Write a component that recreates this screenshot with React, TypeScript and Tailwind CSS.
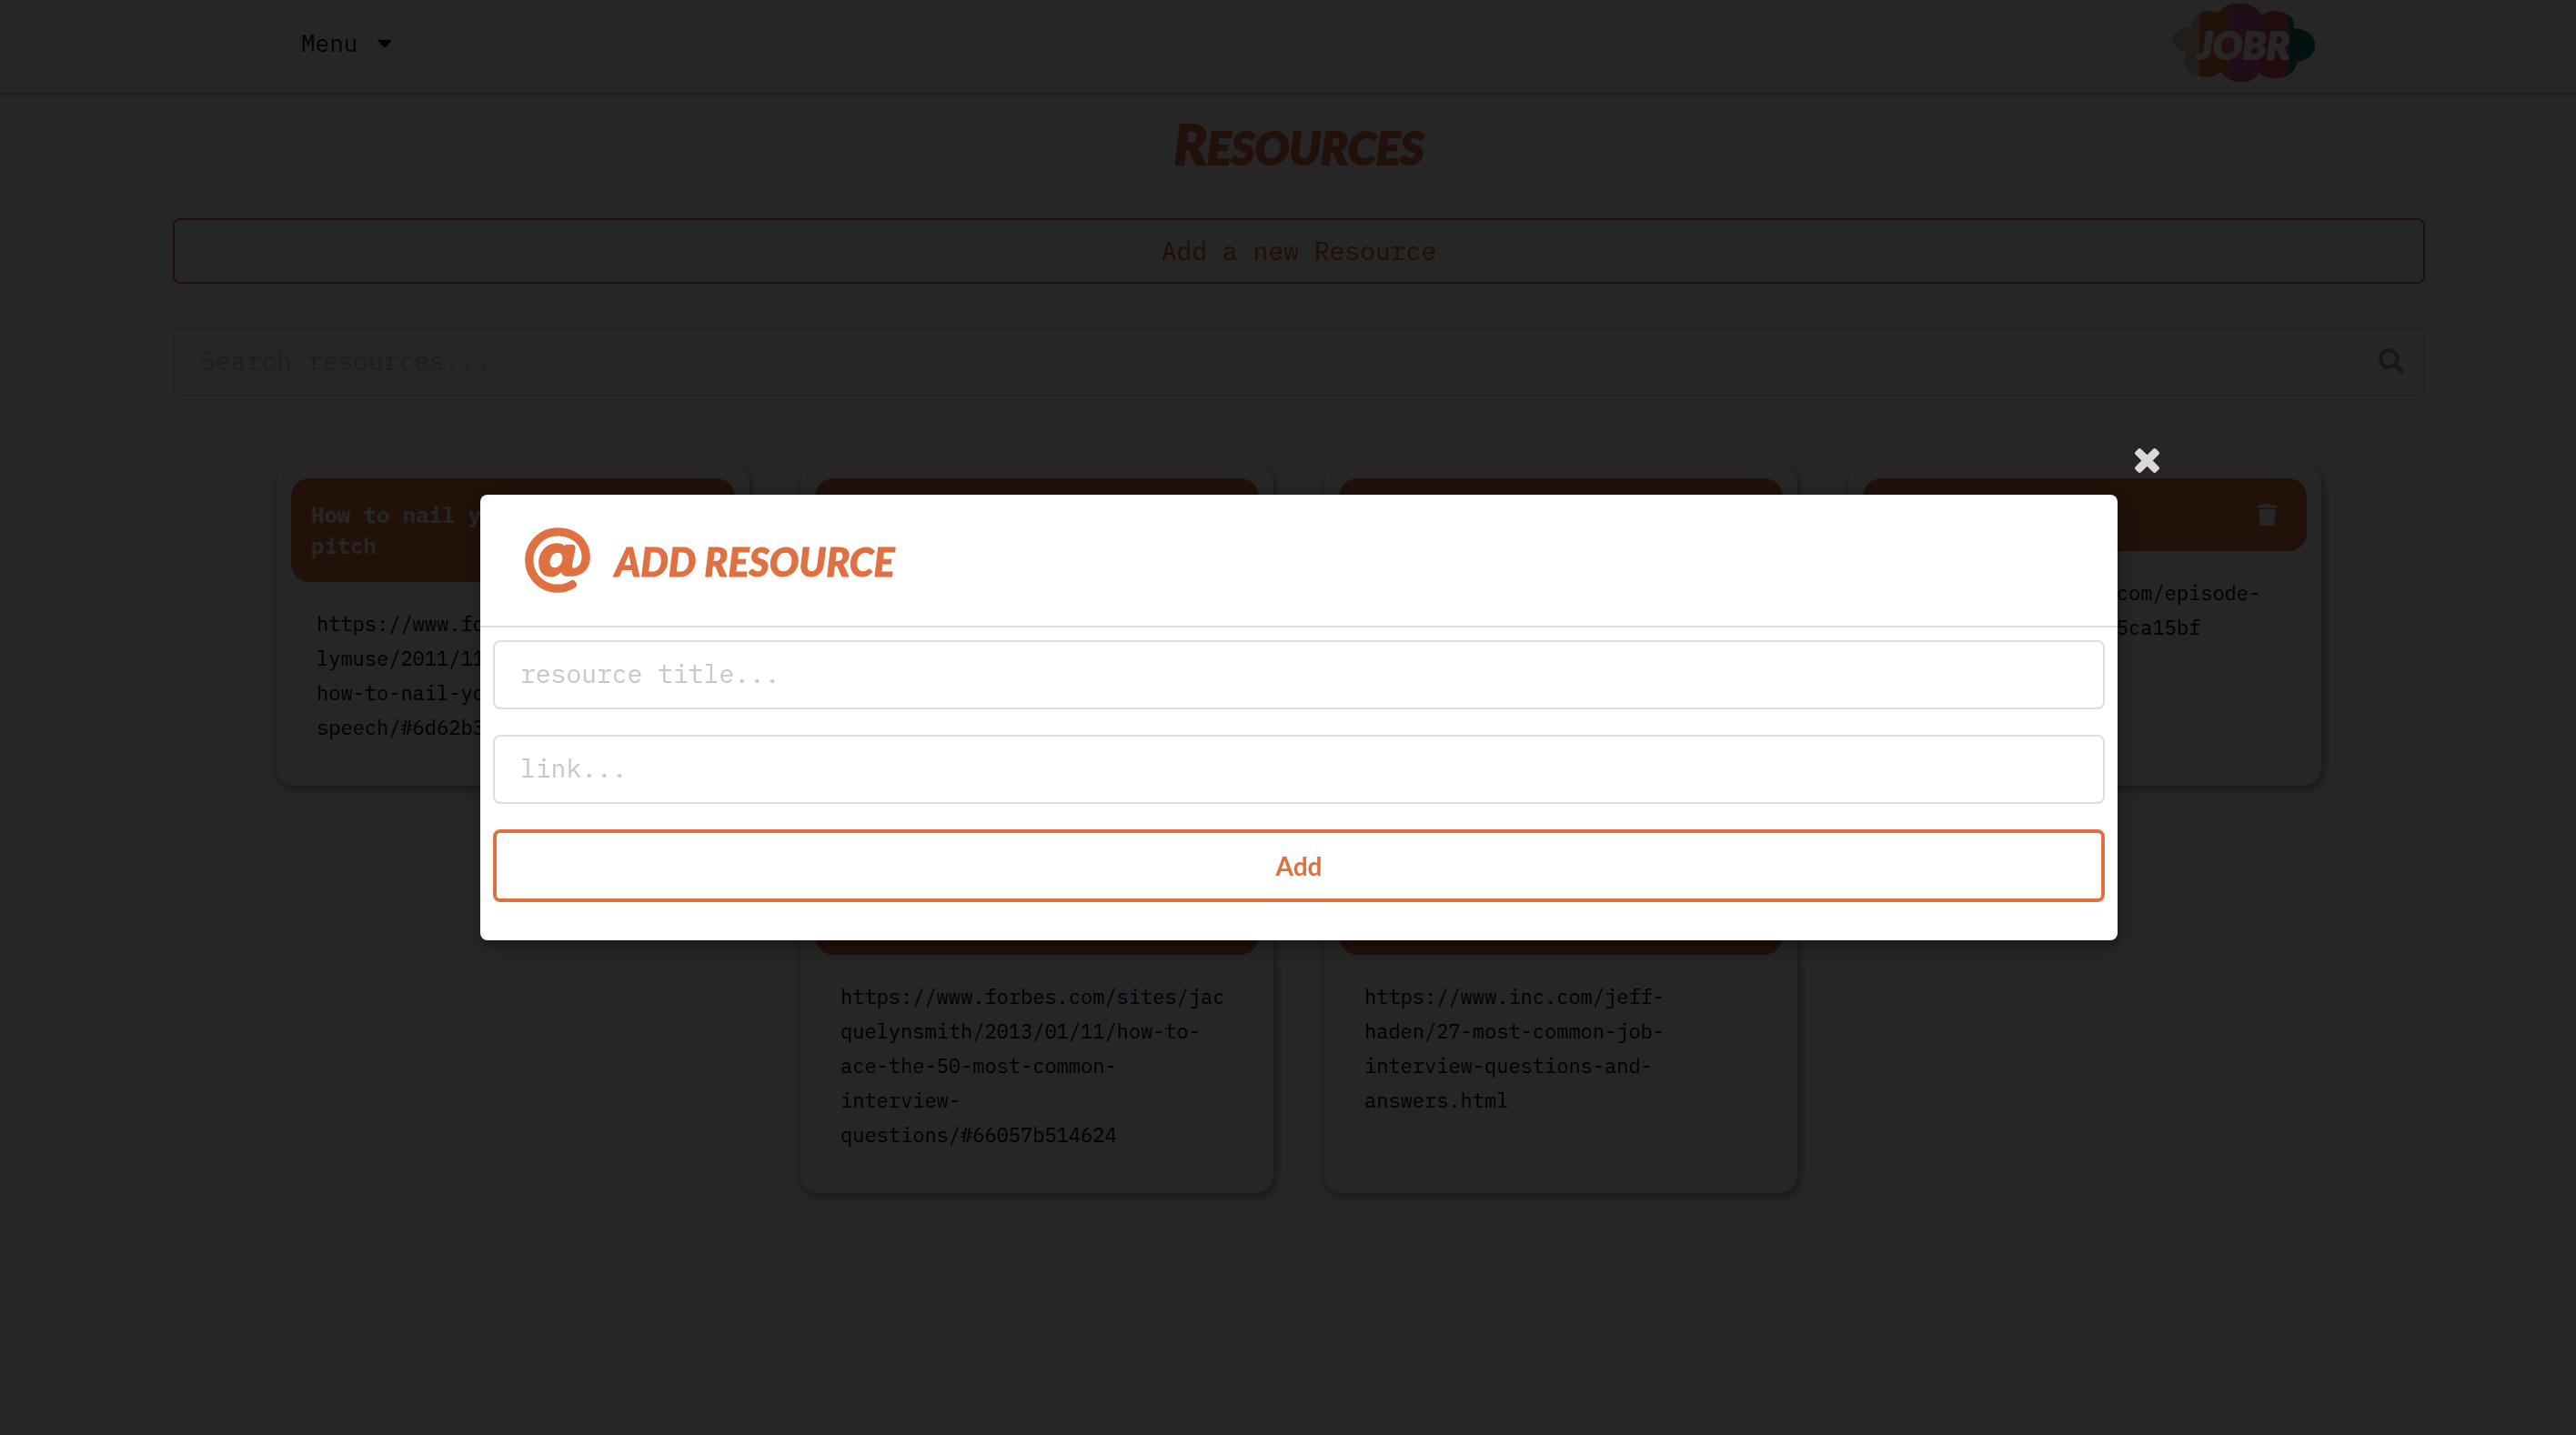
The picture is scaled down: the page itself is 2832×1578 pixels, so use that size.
import React from "react";
import { FaAt, FaCaretDown, FaSearch, FaTrash } from "react-icons/fa";

type Resource = { title: string; link: string };

const resources: Resource[] = [
  {
    title: "How to nail your elevator pitch",
    link: "https://www.forbes.com/sites/dailymuse/2011/11/28/perfect-pitch-how-to-nail-your-elevator-speech/#6d62b3",
  },
  { title: "Resume tips", link: "https://www.forbes.com/resume" },
  { title: "Networking", link: "https://www.inc.com/networking" },
  { title: "Podcast", link: "https://www.podjob.com/episode-101-interview-tips-5ca15bf" },
  {
    title: "How to ace the 50 most common questions",
    link: "https://www.forbes.com/sites/jacquelynsmith/2013/01/11/how-to-ace-the-50-most-common-interview-questions/#66057b514624",
  },
  {
    title: "27 most common interview questions",
    link: "https://www.inc.com/jeff-haden/27-most-common-job-interview-questions-and-answers.html",
  },
];

function Logo() {
  return (
    <svg viewBox="0 0 476 264" className="h-[88px] w-[158px]" role="img" aria-label="JOBR">
      <defs>
        <clipPath id="cloud">
          <ellipse cx="68" cy="122" rx="68" ry="43" />
          <ellipse cx="126" cy="72" rx="60" ry="45" />
          <ellipse cx="222" cy="62" rx="78" ry="62" />
          <ellipse cx="341" cy="72" rx="63" ry="45" />
          <ellipse cx="404" cy="140" rx="70" ry="56" />
          <ellipse cx="110" cy="190" rx="72" ry="56" />
          <ellipse cx="228" cy="196" rx="74" ry="68" />
          <ellipse cx="341" cy="196" rx="72" ry="54" />
          <rect x="80" y="70" width="320" height="130" />
        </clipPath>
      </defs>
      <g clipPath="url(#cloud)">
        <rect width="90" height="264" fill="#dcc0b0" />
        <rect x="90" width="98" height="264" fill="#de7041" />
        <rect x="188" width="100" height="264" fill="#cc5c98" />
        <rect x="288" width="97" height="264" fill="#d44c5c" />
        <rect x="385" width="91" height="264" fill="#1f7070" />
      </g>
      <text
        x="236"
        y="185"
        textAnchor="middle"
        fill="#ffffff"
        stroke="#ffffff"
        strokeWidth="6"
        strokeLinejoin="round"
        className="font-['Permanent_Marker','Lato',sans-serif] text-[128px] font-black italic"
      >
        JOBR
      </text>
    </svg>
  );
}

function CloseIcon() {
  return (
    <svg viewBox="302 366 1188 1188" className="size-[27px]" fill="currentColor" aria-hidden="true">
      <path d="M1490 1322q0 40-28 68l-136 136q-28 28-68 28t-68-28l-294-294-294 294q-28 28-68 28t-68-28l-136-136q-28-28-28-68t28-68l294-294-294-294q-28-28-28-68t28-68l136-136q28-28 68-28t68 28l294 294 294-294q28-28 68-28t68 28l136 136q28 28 28 68t-28 68l-294 294 294 294q28 28 28 68z" />
    </svg>
  );
}

function Header() {
  return (
    <header className="h-[102px] bg-white pl-6 shadow-[0_2px_3px_1px_rgba(0,0,0,0.2)]">
      <div className="mx-auto flex max-w-[2248px] items-start justify-between pt-[3px] pr-[6px] pl-[27px]">
        <button type="button" className="flex h-[88px] items-center gap-[22px] text-[26px] text-black/95">
          Menu
          <FaCaretDown size={26} className="w-4" />
        </button>
        <Logo />
      </div>
    </header>
  );
}

function Card({ title, link }: Resource) {
  return (
    <article className="flex flex-col rounded-[20px] bg-white px-4 pt-[14px] pb-[45px] shadow-[2px_4px_12px_rgba(0,0,0,0.4)]">
      <div className="flex items-center justify-between gap-6 rounded-[20px] bg-[#de7041] py-[23px] pr-[33px] pl-[22px] text-white">
        <h2 className="text-[24px] leading-[34px] font-bold">{title}</h2>
        <button type="button" aria-label={`Delete ${title}`} className="shrink-0">
          <FaTrash size={24} className="w-[21px]" />
        </button>
      </div>
      <a href={link} className="mt-[27px] px-7 text-[22px] leading-[38px] wrap-anywhere text-black">
        {link}
      </a>
    </article>
  );
}

function AddResourceModal() {
  const field =
    "h-[76px] w-full rounded-lg border-2 border-[#dedede] px-7 pb-1 text-[28px] placeholder:text-[#c7c7c7] outline-none";
  return (
    <div className="fixed inset-0 flex items-center justify-center bg-black/85 pl-6">
      <div
        role="dialog"
        aria-modal="true"
        aria-labelledby="modal-title"
        className="relative w-full max-w-[1800px] rounded-lg bg-white shadow-[2px_6px_6px_rgba(0,0,0,0.2),2px_6px_30px_4px_rgba(0,0,0,0.2)]"
      >
        <button type="button" aria-label="Close" className="absolute -top-[51px] -right-[46px] text-[#d9d9d9]">
          <CloseIcon />
        </button>
        <header className="flex h-[146px] items-center gap-[26px] border-b-2 border-[#dedede] px-12 text-[#de7041]">
          <FaAt size={74} />
          <h2
            id="modal-title"
            className="pt-1 font-['Permanent_Marker','Lato',sans-serif] text-[43px] leading-[48px] font-black uppercase italic [-webkit-text-stroke:1px]"
          >
            add resource
          </h2>
        </header>
        <form className="flex flex-col gap-7 px-[14px] pt-[14px] pb-[42px]" onSubmit={(e) => e.preventDefault()}>
          <input aria-label="Resource title" placeholder="resource title..." className={field} />
          <input aria-label="Link" placeholder="link..." className={field} />
          <button
            type="submit"
            className="h-20 rounded-lg border-4 border-[#de7041] font-['Lato',sans-serif] text-[28px] font-bold text-[#de7041]"
          >
            Add
          </button>
        </form>
      </div>
    </div>
  );
}

export default function App() {
  return (
    <div className="min-h-screen bg-white font-['IBM_Plex_Mono','Liberation_Mono',monospace]">
      <Header />
      <main className="pl-6">
        <h1 className="mt-[26px] h-16 text-center font-['Permanent_Marker','Lato',sans-serif] text-[50px] leading-[64px] font-black text-[#de7041] uppercase italic [-webkit-text-stroke:2px] first-letter:text-[60px] first-letter:leading-none">
          Resources
        </h1>
        <div className="mx-auto mt-12 flex max-w-[2476px] flex-col gap-12">
          <button type="button" className="h-[72px] rounded-lg border-2 border-[#d9601f] text-[28px] text-[#d9601f]">
            Add a new Resource
          </button>
          <div className="relative">
            <input
              type="search"
              aria-label="Search resources"
              placeholder="Search resources..."
              className="h-[76px] w-full rounded-lg border-2 border-[#dedede] px-7 pb-1 text-[28px] outline-none placeholder:text-[#c7c7c7]"
            />
            <FaSearch size={28} className="absolute top-[23px] right-[23px] text-[#999999]" />
          </div>
        </div>
        <section className="mx-auto mt-[76px] flex max-w-[2248px] flex-wrap justify-center gap-x-14 gap-y-[58px]">
          {resources.map((resource) => (
            <div key={resource.title} className="grid w-[520px]">
              <Card {...resource} />
            </div>
          ))}
        </section>
      </main>
      <AddResourceModal />
    </div>
  );
}
